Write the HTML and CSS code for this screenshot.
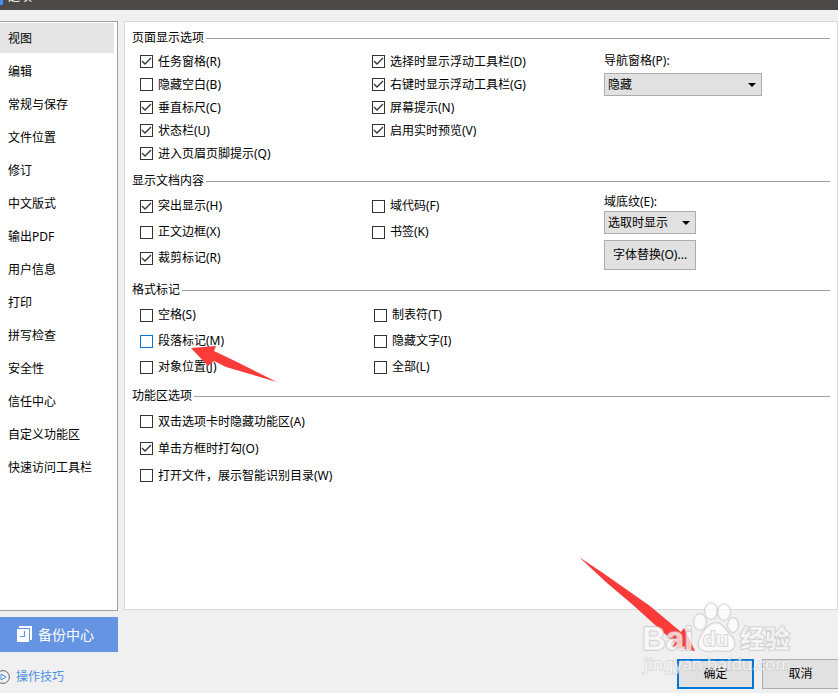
FILE: index.html
```
<!DOCTYPE html>
<html lang="zh-CN">
<head>
    <meta charset="UTF-8">
    <meta name="viewport" content="width=device-width, initial-scale=1.0">
    <title>选项</title>
    <link rel="stylesheet" href="styles.css">
</head>
<body>
    <header class="titlebar">
        <span class="app-icon"></span>
        <h1>选项</h1>
    </header>

    <div class="dialog">
        <aside class="sidebar">
            <nav class="menu">
                <a href="#view" class="active">视图</a>
                <a href="#edit">编辑</a>
                <a href="#save">常规与保存</a>
                <a href="#location">文件位置</a>
                <a href="#revision">修订</a>
                <a href="#chinese">中文版式</a>
                <a href="#pdf">输出PDF</a>
                <a href="#user">用户信息</a>
                <a href="#print">打印</a>
                <a href="#spelling">拼写检查</a>
                <a href="#security">安全性</a>
                <a href="#trust">信任中心</a>
                <a href="#ribbon">自定义功能区</a>
                <a href="#quick">快速访问工具栏</a>
            </nav>
            <button type="button" class="backup">
                <svg width="16" height="17" viewBox="0 0 16 17">
                    <path d="M2 0H15V14H13V2H2Z" fill="#fff"/>
                    <path d="M0 3H12V16H0Z" fill="#fff"/>
                    <path d="M7.500 5V10.500H3" fill="none" stroke="#6594e2" stroke-width="1.200"/>
                </svg>
                备份中心
            </button>
            <a href="#tips" class="tips">
                <svg width="14" height="14" viewBox="0 0 14 14" fill="none">
                    <circle cx="7" cy="7" r="6.400" stroke="#666"/>
                    <path d="M5 4L10 7L5 10Z" stroke="#4a90e2"/>
                </svg>
                操作技巧
            </a>
        </aside>

        <main class="content">
            <form class="panel" id="view">
                <section class="group">
                    <h2>页面显示选项</h2>
                    <div class="columns">
                        <div class="column">
                            <label><input type="checkbox" checked>任务窗格(R)</label>
                            <label><input type="checkbox">隐藏空白(B)</label>
                            <label><input type="checkbox" checked>垂直标尺(C)</label>
                            <label><input type="checkbox" checked>状态栏(U)</label>
                            <label><input type="checkbox" checked>进入页眉页脚提示(Q)</label>
                        </div>
                        <div class="column">
                            <label><input type="checkbox" checked>选择时显示浮动工具栏(D)</label>
                            <label><input type="checkbox" checked>右键时显示浮动工具栏(G)</label>
                            <label><input type="checkbox" checked>屏幕提示(N)</label>
                            <label><input type="checkbox" checked>启用实时预览(V)</label>
                        </div>
                        <div class="fields">
                            <label for="pane">导航窗格(P):</label>
                            <select id="pane" class="wide">
                                <option>隐藏</option>
                            </select>
                        </div>
                    </div>
                </section>

                <section class="group roomy">
                    <h2>显示文档内容</h2>
                    <div class="columns">
                        <div class="column">
                            <label><input type="checkbox" checked>突出显示(H)</label>
                            <label><input type="checkbox">正文边框(X)</label>
                            <label><input type="checkbox" checked>裁剪标记(R)</label>
                        </div>
                        <div class="column">
                            <label><input type="checkbox">域代码(F)</label>
                            <label><input type="checkbox">书签(K)</label>
                        </div>
                        <div class="fields">
                            <label for="shading">域底纹(E):</label>
                            <select id="shading">
                                <option>选取时显示</option>
                            </select>
                            <button type="button" class="btn">字体替换(O)...</button>
                        </div>
                    </div>
                </section>

                <section class="group roomy marks">
                    <h2>格式标记</h2>
                    <div class="columns">
                        <div class="column">
                            <label><input type="checkbox">空格(S)</label>
                            <label><input type="checkbox" class="focused">段落标记(M)</label>
                            <label><input type="checkbox">对象位置(J)</label>
                        </div>
                        <div class="column">
                            <label><input type="checkbox">制表符(T)</label>
                            <label><input type="checkbox">隐藏文字(I)</label>
                            <label><input type="checkbox">全部(L)</label>
                        </div>
                    </div>
                </section>

                <section class="group ribbon">
                    <h2>功能区选项</h2>
                    <div class="column">
                        <label><input type="checkbox">双击选项卡时隐藏功能区(A)</label>
                        <label><input type="checkbox" checked>单击方框时打勾(O)</label>
                        <label><input type="checkbox">打开文件，展示智能识别目录(W)</label>
                    </div>
                </section>
            </form>

            <footer class="actions">
                <button type="button" class="btn primary">确定</button>
                <button type="button" class="btn">取消</button>
            </footer>
        </main>
    </div>

    <!-- red arrows and site watermark -->
    <svg class="overlay" width="838" height="693" viewBox="0 0 838 693">
        <g fill="#fb3b39">
            <path d="M191 348L216 346L214 351L235 361L277 382L226 367L214 361L208 366Z"/>
            <path d="M579 557L603 573L650 606L681 632L684 628L695 651L672 647L675 643L633 605L607 583Z"/>
        </g>
        <g class="watermark">
            <text x="642" y="650" font-size="33">Bai</text>
            <ellipse cx="700" cy="622" rx="6" ry="8"/>
            <ellipse cx="711" cy="611" rx="6" ry="8"/>
            <ellipse cx="724" cy="612" rx="6" ry="8"/>
            <ellipse cx="733" cy="625" rx="5" ry="7"/>
            <path d="M716 623C723 623 725 630 730 635C737 641 736 651 727 651C721 651 718 650 712 651C703 652 697 649 699 641C701 634 708 623 716 623Z"/>
            <text x="703" y="646" font-size="21">du</text>
            <text x="740" y="648" font-size="25">经验</text>
            <text x="644" y="670" font-size="17" class="site">jingyan.baidu.com</text>
        </g>
    </svg>
</body>
</html>
```
FILE: styles.css
```
* {
    box-sizing: border-box;
}

body {
    margin: 0;
    height: 100vh;
    display: flex;
    flex-direction: column;
    overflow: hidden;
    position: relative;
    background: #f0f0f0;
    color: #000;
    font-family: "Noto Sans", "Noto Sans CJK SC", sans-serif;
    font-size: 12px;
    line-height: 18px;
}

button,
select,
input {
    font: inherit;
    color: inherit;
    margin: 0;
}

a {
    color: inherit;
    text-decoration: none;
}

.titlebar {
    height: 10px;
    flex: none;
    display: flex;
    align-items: flex-end;
    gap: 5px;
    overflow: hidden;
    background: #4b4a48;
    color: #fff;
}

.titlebar h1 {
    margin: 0 0 4px;
    font-size: 12px;
    font-weight: normal;
}

.app-icon {
    width: 3px;
    height: 5px;
    margin-bottom: 5px;
    background: #4a8cf0;
}

.dialog {
    flex: 1;
    display: flex;
    gap: 6px;
    padding-top: 11px;
}

.sidebar {
    width: 118px;
    flex: none;
    display: flex;
    flex-direction: column;
}

.menu {
    flex: 1;
    padding: 1px 3px 0 0;
    background: #fff;
    border: 1px solid #a0a0a0;
    border-left: 0;
}

.menu a {
    display: block;
    height: 30px;
    margin-bottom: 3px;
    padding-left: 8px;
    line-height: 32px;
}

.menu a.active {
    background: #e5e5e5;
}

.backup {
    height: 35px;
    margin-top: 6px;
    padding: 0 0 0 17px;
    display: flex;
    align-items: center;
    gap: 5px;
    border: 0;
    background: #6594e2;
    color: #fff;
    font-size: 14px;
}

.tips {
    display: flex;
    align-items: center;
    gap: 6px;
    height: 18px;
    margin: 16px 0 7px -4px;
    color: #4a90e2;
}

.content {
    flex: 1;
    display: flex;
    flex-direction: column;
}

.panel {
    flex: 1;
    padding: 7px;
    background: #fff;
    border: 1px solid #d9d9d9;
}

.group {
    margin-bottom: 7px;
}

.group.roomy {
    margin-bottom: 10px;
}

.group.marks {
    margin-bottom: 7px;
}

.group h2 {
    display: flex;
    align-items: center;
    gap: 2px;
    margin: 0 0 3px;
    font-size: 12px;
    font-weight: normal;
}

.group h2::after {
    content: "";
    flex: 1;
    height: 1px;
    background: #a0a0a0;
}

.columns {
    display: flex;
}

.column {
    display: flex;
    flex-direction: column;
    padding-left: 8px;
}

.columns .column {
    width: 232px;
}

.marks .columns .column {
    width: 234px;
}

.column label {
    display: flex;
    align-items: center;
    gap: 5px;
    height: 23px;
}

.roomy .column label {
    height: 26px;
}

.ribbon .column label {
    height: 27px;
}

input[type="checkbox"] {
    appearance: none;
    width: 13px;
    height: 13px;
    border: 1px solid #333;
    background: #fff;
}

input[type="checkbox"]:checked {
    background: #fff url("data:image/svg+xml,%3Csvg xmlns='http://www.w3.org/2000/svg' width='11' height='11'%3E%3Cpath d='M1 5L4 8L10 2' fill='none' stroke='%23333' stroke-width='1.3'/%3E%3C/svg%3E") center no-repeat;
}

input[type="checkbox"].focused {
    border-color: #0078d7;
}

.fields {
    display: flex;
    flex-direction: column;
    align-items: flex-start;
    padding: 2px 0 0 8px;
}

.fields label {
    margin-bottom: 3px;
}

.roomy .fields {
    padding-top: 0;
}

.roomy .fields label {
    margin-bottom: 0;
}

select {
    appearance: none;
    width: 92px;
    height: 23px;
    padding: 0 3px;
    border: 1px solid #adadad;
    border-radius: 0;
    background: #e1e1e1 url("data:image/svg+xml,%3Csvg xmlns='http://www.w3.org/2000/svg' width='8' height='4'%3E%3Cpath d='M0 0H8L4 4Z'/%3E%3C/svg%3E") right 5px center no-repeat;
}

.btn {
    width: 92px;
    height: 30px;
    padding: 0;
    border: 1px solid #adadad;
    background: #e1e1e1;
}

.fields .btn {
    margin-top: 6px;
}

select.wide {
    width: 158px;
}

.actions {
    display: flex;
    justify-content: flex-end;
    gap: 8px;
    margin-right: -1px;
    padding: 49px 0 4px;
}

.actions .btn {
    width: 77px;
}

.actions .primary {
    border: 2px solid #0078d7;
}

.overlay {
    position: absolute;
    top: 0;
    left: 0;
    pointer-events: none;
}

.watermark {
    fill: rgba(255, 255, 255, 0.7);
    stroke: rgba(190, 190, 190, 0.6);
    stroke-width: 2px;
    paint-order: stroke;
    font-family: "Liberation Sans", "Noto Sans CJK SC", sans-serif;
    font-weight: bold;
}

.watermark .site {
    font-family: "Noto Sans", sans-serif;
    font-weight: normal;
    stroke: rgba(190, 190, 190, 0.4);
}
```
